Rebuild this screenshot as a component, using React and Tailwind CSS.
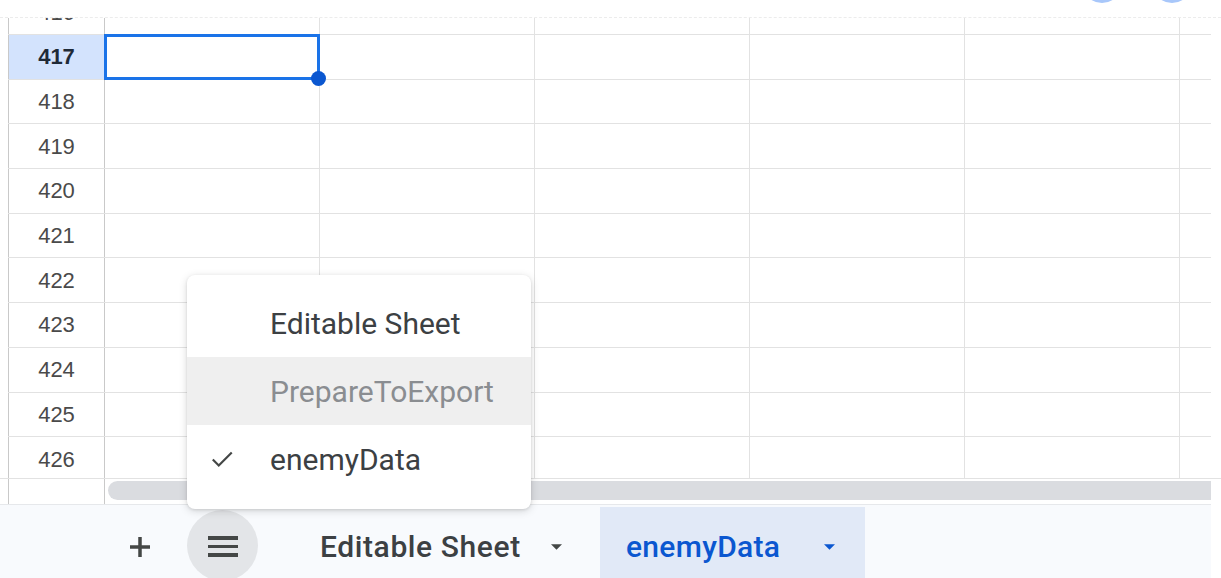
import React from 'react';

const rows = [416, 417, 418, 419, 420, 421, 422, 423, 424, 425, 426];
const cols = [0, 1, 2, 3, 4];

const Caret = ({ className }) => (
  <svg viewBox="0 0 10 5" className={className} fill="currentColor">
    <path d="M0 0h10L5 5z" />
  </svg>
);

const Row = ({ n }) => {
  const selected = n === 417;
  return (
    <div className="flex h-[44.7px] border-b border-[#e2e2e2]">
      <div
        className={`w-[97px] shrink-0 flex items-center justify-center border-l border-r border-[#c9c9c9] text-[22px] ${
          selected ? 'bg-[#d3e3fd] font-bold text-[#1f2a37]' : 'bg-white text-[#4a4a4a]'
        }`}
        style={{ fontFamily: '"Liberation Sans", Arial, sans-serif' }}
      >
        {n}
      </div>
      {cols.map((c) => (
        <div key={c} className="relative w-[215px] shrink-0 border-r border-[#e2e2e2]">
          {selected && c === 0 && (
            <div className="absolute -top-[1px] -left-[1px] -right-[1px] -bottom-[1px] border-[3px] border-[#1a73e8] z-10">
              <div className="absolute -bottom-[9px] -right-[9px] w-[15px] h-[15px] rounded-full bg-[#0b57d0]" />
            </div>
          )}
        </div>
      ))}
      <div className="flex-1" />
    </div>
  );
};

const MenuItem = ({ label, checked, hovered }) => (
  <div className={`flex items-center h-[68px] ${hovered ? 'bg-[#efefef]' : ''}`}>
    <div className="w-[83px] shrink-0 pl-[22px] flex items-center">
      {checked && (
        <svg viewBox="0 0 24 24" className="w-[26px] h-[26px] text-[#444746]" fill="none" stroke="currentColor" strokeWidth="2">
          <path d="M3.5 12.5l5.5 5.5L21 6" />
        </svg>
      )}
    </div>
    <span className={`text-[30px] ${hovered ? 'text-[#8a8d91]' : 'text-[#3c4043]'}`}>{label}</span>
  </div>
);

export default function App() {
  return (
    <div className="relative w-[1221px] h-[578px] bg-white overflow-hidden flex flex-col" style={{ fontFamily: 'Roboto, "Liberation Sans", sans-serif' }}>
      {/* top strip with cut-off avatars */}
      <div className="h-[17px] shrink-0 flex justify-end items-start gap-[30px] pr-[29px] overflow-hidden">
        <div className="w-[40px] h-[40px] -mt-[37px] rounded-full border-[3px] border-[#a8c7fa]" />
        <div className="w-[40px] h-[40px] -mt-[37px] rounded-full border-[3px] border-[#a8c7fa]" />
      </div>

      {/* grid */}
      <div className="h-[461px] shrink-0 overflow-hidden pl-[8px] pr-[10px] border-t border-dashed border-[#ececec]">
        <div className="-mt-[27.7px]">
          {rows.map((n) => (
            <Row key={n} n={n} />
          ))}
        </div>
      </div>

      {/* horizontal scrollbar */}
      <div className="h-[26px] shrink-0 flex pl-[8px] pr-[10px] border-t border-[#e2e2e2]">
        <div className="w-[97px] shrink-0 border-l border-r border-[#c9c9c9] bg-white" />
        <div className="flex-1 pl-[3px] pt-[2px] pb-[4px] overflow-hidden">
          <div className="h-full w-[calc(100%+20px)] rounded-full bg-[#dadce0]" />
        </div>
      </div>

      {/* sheet tabs */}
      <div className="flex-1 flex mr-[10px] bg-[#f8fafd] border-t border-[#e6e8eb] overflow-hidden">
        <div className="w-[112px] shrink-0" />
        <div className="w-[56px] shrink-0 flex items-center justify-center pt-[10px]">
          <svg viewBox="0 0 24 24" className="w-[24px] h-[24px] text-[#444746]" fill="none" stroke="currentColor" strokeWidth="3.5">
            <path d="M12 2v20M2 12h20" />
          </svg>
        </div>
        <div className="ml-[19px] mt-[5px] w-[71px] h-[71px] shrink-0 rounded-full bg-[#e3e5e8] flex items-center justify-center">
          <div className="w-[30px] flex flex-col gap-[5px] mt-[2px]">
            <div className="h-[3.5px] bg-[#444746]" />
            <div className="h-[3.5px] bg-[#444746]" />
            <div className="h-[3.5px] bg-[#444746]" />
          </div>
        </div>
        <div className="w-[342px] shrink-0 flex items-center pl-[62px] pt-[10px] text-[#3c4043]">
          <span className="text-[30px] font-medium tracking-[0.6px]">Editable Sheet</span>
          <Caret className="w-[11px] h-[6px] ml-[30px] text-[#444746]" />
        </div>
        <div className="w-[265px] shrink-0 mt-[2px] bg-[#e1e9f7] flex items-center pl-[26px] pt-[8px] text-[#0b57d0]">
          <span className="text-[30px] font-medium tracking-[0.3px]">enemyData</span>
          <Caret className="w-[11px] h-[6px] ml-[44px]" />
        </div>
      </div>

      {/* sheet list menu */}
      <div className="absolute left-[187px] top-[275px] w-[344px] pt-[14px] pb-[16px] bg-white rounded-[8px] shadow-[0_2px_8px_rgba(0,0,0,0.15),0_1px_3px_rgba(0,0,0,0.1)] z-20">
        <MenuItem label="Editable Sheet" />
        <MenuItem label="PrepareToExport" hovered />
        <MenuItem label="enemyData" checked />
      </div>
    </div>
  );
}
